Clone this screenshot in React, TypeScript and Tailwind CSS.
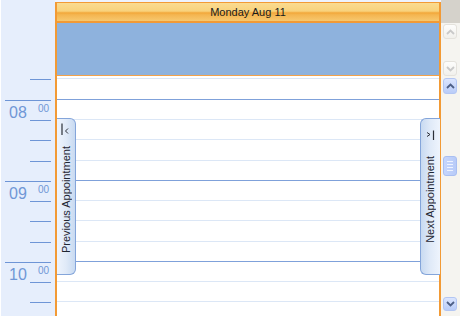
import React from 'react';

type Row = { h: string; hour?: boolean; label?: string };

const rows: Row[] = [
  { h: 'h-[3px]' },
  { h: 'h-[21px]', hour: true },
  { h: 'h-[20px]', label: '08' },
  { h: 'h-[20px]' },
  { h: 'h-[21px]' },
  { h: 'h-[20px]', hour: true },
  { h: 'h-[20px]', label: '09' },
  { h: 'h-[20px]' },
  { h: 'h-[21px]' },
  { h: 'h-[20px]', hour: true },
  { h: 'h-[20px]', label: '10' },
  { h: 'h-[20px]' },
];

const Chevron = ({ up, disabled }: { up?: boolean; disabled?: boolean }) => (
  <svg width="9" height="6" viewBox="0 0 9 6">
    <polyline
      points={up ? '1,5 4.5,1.5 8,5' : '1,1 4.5,4.5 8,1'}
      fill="none"
      stroke={disabled ? '#c9c9c9' : '#4d5f86'}
      strokeWidth="1.8"
    />
  </svg>
);

const ScrollButton = ({ up, disabled, h }: { up?: boolean; disabled?: boolean; h: string }) => (
  <div
    className={`ml-[2px] w-[14px] ${h} shrink-0 rounded-[3px] border flex items-center justify-center ${
      disabled
        ? 'border-[#e4e2dc] bg-gradient-to-b from-[#fdfdfc] to-[#f1f0ec]'
        : 'border-[#b3c6f3] bg-gradient-to-b from-[#dbe5fe] to-[#b9ccf8]'
    }`}
  >
    <Chevron up={up} disabled={disabled} />
  </div>
);

const RulerRow = ({ row }: { row: Row }) => {
  if (row.label) {
    return (
      <div className={`flex ${row.h} shrink-0`}>
        <span className="pl-[8px] pt-[4px] text-[16px] leading-none text-[#7097d6]">{row.label}</span>
        <div className="ml-auto mr-[4px] w-[21px] border-b border-[#6e95d6] flex justify-end pr-[2px] pt-[3px]">
          <span className="text-[10px] leading-none text-[#7097d6]">00</span>
        </div>
      </div>
    );
  }
  return (
    <div className={`flex justify-end ${row.h} shrink-0`}>
      <div className={`mr-[4px] border-b border-[#6e95d6] ${row.hour ? 'w-[46px]' : 'w-[21px]'}`} />
    </div>
  );
};

const App = () => {
  return (
    <div className="w-[460px] h-[321px] bg-white font-['Liberation_Sans',Arial,sans-serif] overflow-hidden">
      <div className="flex h-[316px]">
        {/* time ruler */}
        <div className="w-[55px] shrink-0 border-l border-white bg-[#e6eefc] flex flex-col">
          <div className="h-[77px] shrink-0" />
          {rows.map((r, i) => (
            <RulerRow key={i} row={r} />
          ))}
        </div>

        {/* day column */}
        <div className="w-[386px] shrink-0 flex flex-col bg-[#eef3fd] pt-[2px]">
          <div className="relative flex-1 flex flex-col border-x-2 border-[#f29a35] bg-white">
            <div className="h-[21px] shrink-0 border-t border-b-2 border-[#f29a35] bg-[linear-gradient(to_bottom,#fadb90_0%,#f8d27c_45%,#f2a73a_55%,#f4b550_65%,#f7c86f_100%)] flex items-center justify-center">
              <span className="text-[11px] leading-none text-[#1a1a1a]">Monday Aug 11</span>
            </div>
            <div className="h-[53px] shrink-0 bg-[#8eb2dd] border-b border-[#f2a24a]" />
            {rows.map((r, i) => (
              <div
                key={i}
                className={`${r.h} shrink-0 border-b ${r.hour ? 'border-[#7fa1da]' : 'border-[#dce7f6]'}`}
              />
            ))}
            <div className="flex-1" />

            {/* previous appointment tab */}
            <div className="absolute left-0 top-[116px] w-[19px] h-[157px] rounded-r-[6px] border border-l-0 border-[#84a5da] bg-gradient-to-r from-[#eef4fd] via-[#e0eaf8] to-[#c8daf1] flex items-center justify-center pt-[6px]">
              <svg className="absolute left-[3px] top-[4px]" width="10" height="13" viewBox="0 0 10 13">
                <line x1="2" y1="0.5" x2="2" y2="12" stroke="#2b2f38" strokeWidth="1.2" />
                <polyline points="8,5.5 5.5,8 8,10.5" fill="none" stroke="#2b2f38" strokeWidth="1" />
              </svg>
              <span className="[writing-mode:vertical-rl] rotate-180 text-[11px] leading-none text-[#1f2633] whitespace-nowrap">
                Previous Appointment
              </span>
            </div>

            {/* next appointment tab */}
            <div className="absolute right-[-1px] top-[116px] w-[20px] h-[157px] rounded-l-[6px] border border-r-0 border-[#84a5da] bg-gradient-to-l from-[#eef4fd] via-[#e0eaf8] to-[#c8daf1] flex items-center justify-center pt-[6px]">
              <svg className="absolute left-[5px] top-[11px]" width="10" height="11" viewBox="0 0 10 11">
                <polyline points="1,2.5 4,4.5 1,6.5" fill="none" stroke="#2b2f38" strokeWidth="1" />
                <line x1="7.5" y1="0.5" x2="7.5" y2="10" stroke="#2b2f38" strokeWidth="1.2" />
              </svg>
              <span className="[writing-mode:vertical-rl] rotate-180 text-[11px] leading-none text-[#1f2633] whitespace-nowrap">
                Next Appointment
              </span>
            </div>
          </div>
        </div>

        {/* scrollbar */}
        <div className="w-[19px] shrink-0 flex flex-col bg-[#f5f4f0]">
          <div className="h-[23px] shrink-0 bg-[#d5d2cb]" />
          <div className="h-[54px] shrink-0 flex flex-col justify-between pt-[1px] pb-[1px]">
            <ScrollButton up disabled h="h-[15px]" />
            <ScrollButton disabled h="h-[15px]" />
          </div>
          <div className="flex-1 flex flex-col">
            <div className="mt-[1px]">
              <ScrollButton up h="h-[16px]" />
            </div>
            <div className="mt-[62px] ml-[2px] w-[14px] h-[20px] rounded-[3px] border border-[#a9bff2] bg-gradient-to-r from-[#c6d6fd] to-[#b8cbf8] flex flex-col items-center justify-center gap-[2px]">
              <div className="w-[6px] h-px bg-[#eef3ff]" />
              <div className="w-[6px] h-px bg-[#eef3ff]" />
              <div className="w-[6px] h-px bg-[#eef3ff]" />
              <div className="w-[6px] h-px bg-[#eef3ff]" />
            </div>
            <div className="mt-auto mb-[5px]">
              <ScrollButton h="h-[14px]" />
            </div>
          </div>
        </div>
      </div>
    </div>
  );
};

export default App;
